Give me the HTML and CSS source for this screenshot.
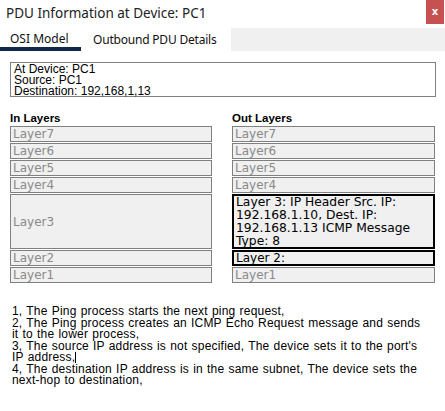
FILE: index.html
```html
<!DOCTYPE html>
<html>
<head>
<meta charset="utf-8">
<link rel="stylesheet" href="styles.css">
</head>
<body>
<div class="window">
  <div class="titlebar">
    <span class="title">PDU Information at Device: PC1</span>
    <span class="close">x</span>
  </div>
  <div class="tabs">
    <div class="tab active">OSI Model</div>
    <div class="tab second">Outbound PDU Details</div>
    <div class="tab-fill"></div>
  </div>
  <div class="info">
    <div>At Device: PC1</div>
    <div>Source: PC1</div>
    <div>Destination: 192,168,1,13</div>
  </div>
  <div class="layers">
    <div class="col">
      <div class="col-head">In Layers</div>
      <div class="layer">Layer7</div>
      <div class="layer">Layer6</div>
      <div class="layer">Layer5</div>
      <div class="layer">Layer4</div>
      <div class="layer tall">Layer3</div>
      <div class="layer">Layer2</div>
      <div class="layer">Layer1</div>
    </div>
    <div class="col">
      <div class="col-head">Out Layers</div>
      <div class="layer">Layer7</div>
      <div class="layer">Layer6</div>
      <div class="layer">Layer5</div>
      <div class="layer">Layer4</div>
      <div class="layer tall active">Layer 3: IP Header Src. IP: 192.168.1.10, Dest. IP: 192.168.1.13 ICMP Message Type: 8</div>
      <div class="layer active">Layer 2:</div>
      <div class="layer">Layer1</div>
    </div>
  </div>
  <div class="notes">
    <p>1, The Ping process starts the next ping request,</p>
    <p>2, The Ping process creates an ICMP Echo Request message and sends<br>it to the lower process,</p>
    <p>3, The source IP address is not specified, The device sets it to the port's<br>IP address,<span class="caret"></span></p>
    <p>4, The destination IP address is in the same subnet, The device sets the<br>next-hop to destination,</p>
  </div>
</div>
</body>
</html>
```
FILE: styles.css
```css
html, body {
  margin: 0;
  padding: 0;
  background: #ffffff;
}
.window {
  width: 445px;
  height: 411px;
  background: #ffffff;
  font-family: "Liberation Sans", Arial, sans-serif;
  color: #000;
}
.titlebar {
  height: 28px;
  display: flex;
  align-items: flex-start;
  justify-content: space-between;
}
.title {
  font-family: "Noto Sans", "Open Sans", sans-serif;
  font-size: 13.5px;
  color: #222;
  line-height: 26px;
  padding-left: 6px;
}
.close {
  width: 18px;
  height: 24px;
  margin-right: 1px;
  background: #c75050;
  color: #fff;
  font-family: "DejaVu Sans", sans-serif;
  font-weight: bold;
  font-size: 10px;
  line-height: 24px;
  text-align: center;
}
.tabs {
  height: 23px;
  display: flex;
}
.tab {
  font-family: "Noto Sans", "Open Sans", sans-serif;
  font-size: 12px;
  color: #111;
  padding: 0 12px;
  line-height: 23px;
  box-sizing: border-box;
  white-space: nowrap;
  flex: none;
}
.tab.active {
  width: 81px;
  padding-left: 10px;
  border-bottom: 4px solid #12284a;
  line-height: 21px;
}
.tab.second {
  width: 150px;
  letter-spacing: -0.2px;
}
.tab-fill {
  flex: 1;
  background: #f0f0f0;
}
.info {
  margin: 11px 10px 0 10px;
  width: 426px;
  box-sizing: border-box;
  height: 35px;
  border: 1px solid #808080;
  padding: 1px 3px 0 3px;
  font-size: 12px;
  line-height: 11px;
}
.layers {
  display: grid;
  grid-template-columns: 202px 203px;
  column-gap: 20px;
  margin: 15px 0 0 10px;
}
.col {
  display: flex;
  flex-direction: column;
  gap: 1px;
}
.col-head {
  font-weight: bold;
  font-size: 11.5px;
  line-height: 13px;
}
.layer {
  height: 16px;
  box-sizing: border-box;
  border: 1px solid #808080;
  background: #f0f0f0;
  color: #8a8a8a;
  font-family: "DejaVu Sans", Verdana, sans-serif;
  font-size: 12px;
  line-height: 14px;
  padding-left: 2px;
}
.layer.tall {
  height: 55px;
  display: flex;
  align-items: center;
}
.layer.active {
  border: 2px solid #000;
  color: #000;
  padding-left: 2px;
  line-height: 12px;
}
.layer.tall.active {
  display: block;
  font-size: 12.3px;
  line-height: 13px;
  padding-top: 0;
}
.notes {
  margin: 23px 0 0 12px;
  width: 430px;
  font-size: 12px;
  line-height: 11px;
  word-spacing: 0.6px;
  letter-spacing: 0.2px;
  white-space: nowrap;
}
.notes p {
  margin: 0 0 1px 0;
}
.caret {
  display: inline-block;
  width: 1px;
  height: 11px;
  background: #000;
  vertical-align: -2px;
}
```
